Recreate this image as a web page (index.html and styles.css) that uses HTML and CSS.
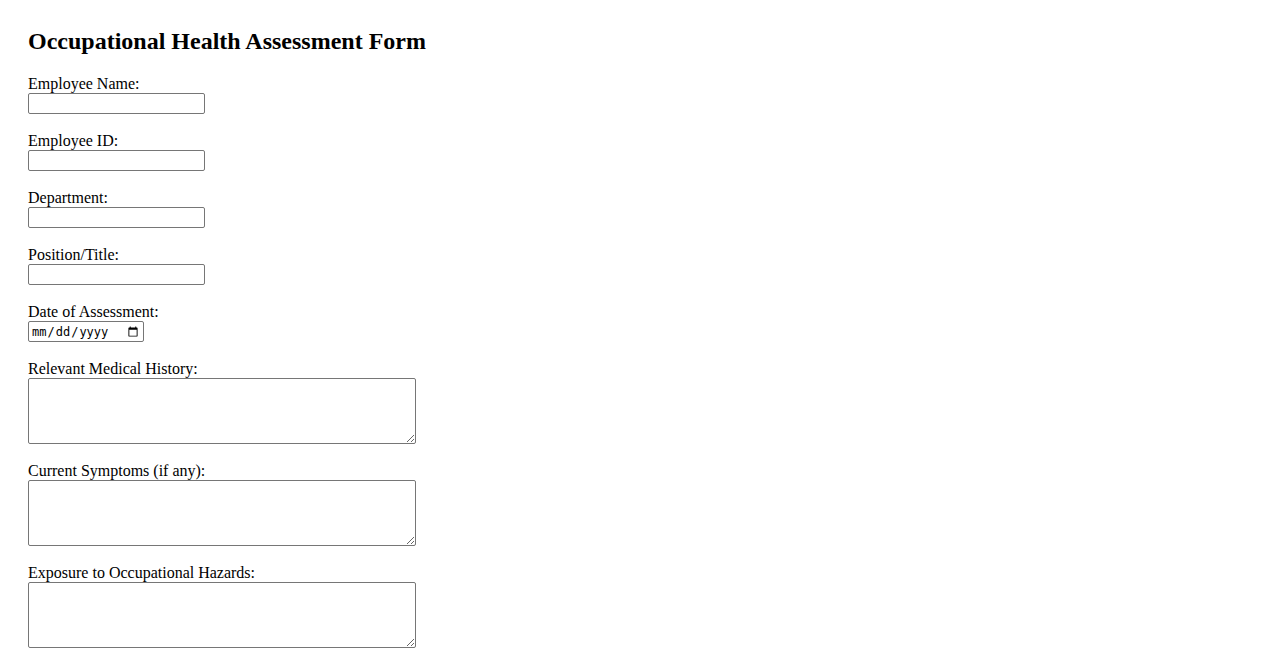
FILE: index.html
```html
<!DOCTYPE html>
<html lang="en">
<head>
<meta charset="utf-8">
<title>Occupational Health Assessment Form</title>
<link rel="stylesheet" href="styles.css">
</head>
<body>
<div class="page">
  <h2 class="title">Occupational Health Assessment Form</h2>
  <form class="form">
    <div class="group">
      <label class="label" for="name">Employee Name:</label>
      <input class="text" type="text" id="name">
    </div>
    <div class="group">
      <label class="label" for="eid">Employee ID:</label>
      <input class="text" type="text" id="eid">
    </div>
    <div class="group">
      <label class="label" for="dept">Department:</label>
      <input class="text" type="text" id="dept">
    </div>
    <div class="group">
      <label class="label" for="pos">Position/Title:</label>
      <input class="text" type="text" id="pos">
    </div>
    <div class="group">
      <label class="label" for="date">Date of Assessment:</label>
      <input class="date" type="date" id="date">
    </div>
    <div class="group">
      <label class="label" for="hist">Relevant Medical History:</label>
      <textarea class="area" id="hist"></textarea>
    </div>
    <div class="group">
      <label class="label" for="sym">Current Symptoms (if any):</label>
      <textarea class="area" id="sym"></textarea>
    </div>
    <div class="group">
      <label class="label" for="haz">Exposure to Occupational Hazards:</label>
      <textarea class="area" id="haz"></textarea>
    </div>
  </form>
</div>
</body>
</html>
```
FILE: styles.css
```css
html, body {
  margin: 0;
  padding: 0;
  background: #fff;
}
body {
  font-family: "Liberation Serif", "Times New Roman", serif;
  font-size: 16px;
  color: #000;
}
.page {
  padding: 28px;
}
.title {
  font-size: 24px;
  font-weight: bold;
  margin: 0 0 20px 0;
  line-height: 27px;
}
.form {
  display: flex;
  flex-direction: column;
}
.group {
  display: flex;
  flex-direction: column;
  align-items: flex-start;
  margin-bottom: 18px;
}
.label {
  display: block;
  line-height: 18px;
}
.text {
  box-sizing: border-box;
  width: 177px;
  height: 21px;
  margin: 0;
  border: 1px solid #767676;
  border-radius: 2px;
  padding: 1px 2px;
  font-family: "Liberation Sans", Arial, sans-serif;
  font-size: 13.33px;
}
.date {
  box-sizing: border-box;
  width: 116px;
  height: 21px;
  margin: 0;
  border: 1px solid #767676;
  border-radius: 2px;
  padding: 1px 2px;
  font-family: "DejaVu Sans Mono", monospace;
  font-size: 12px;
}
.area {
  box-sizing: border-box;
  width: 388px;
  height: 66px;
  margin: 0;
  border: 1px solid #767676;
  border-radius: 2px;
  padding: 2px;
  font-family: "Liberation Mono", monospace;
  font-size: 13.33px;
  resize: both;
}
```
